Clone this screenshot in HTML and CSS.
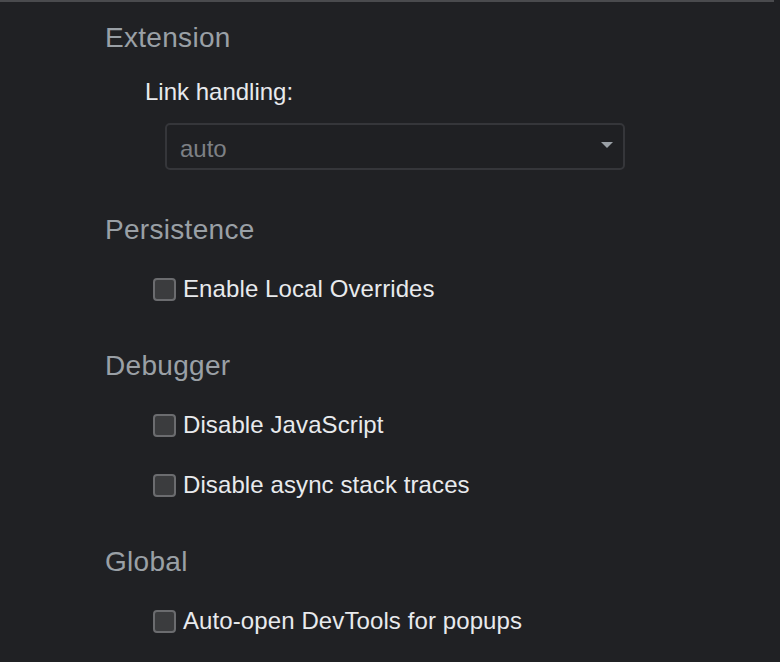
FILE: index.html
```html
<!DOCTYPE html>
<html lang="en">
<head>
<meta charset="utf-8">
<title>Settings</title>
<link rel="stylesheet" href="styles.css">
</head>
<body>
<div class="topline"></div>
<main class="settings">
  <section class="section section--select">
    <h2 class="section-title">Extension</h2>
    <div class="field">
      <div class="field-label">Link handling:</div>
      <div class="select">
        <span class="select-value">auto</span>
        <svg class="select-arrow" width="12" height="6" viewBox="0 0 12 6"><path d="M0 0H12L6 6Z" fill="#9aa0a6"/></svg>
      </div>
    </div>
  </section>
  <section class="section">
    <h2 class="section-title">Persistence</h2>
    <label class="check-row"><input type="checkbox" class="check"><span class="check-text">Enable Local Overrides</span></label>
  </section>
  <section class="section">
    <h2 class="section-title">Debugger</h2>
    <label class="check-row"><input type="checkbox" class="check"><span class="check-text">Disable JavaScript</span></label>
    <label class="check-row"><input type="checkbox" class="check"><span class="check-text">Disable async stack traces</span></label>
  </section>
  <section class="section">
    <h2 class="section-title">Global</h2>
    <label class="check-row"><input type="checkbox" class="check"><span class="check-text">Auto-open DevTools for popups</span></label>
  </section>
</main>
</body>
</html>
```

FILE: styles.css
```css
html, body {
  margin: 0;
  padding: 0;
  background: #202124;
  height: 100%;
  overflow: hidden;
}
body {
  font-family: "Liberation Sans", Arial, Helvetica, sans-serif;
  color: #e8eaed;
}
.topline {
  height: 2px;
  width: 774px;
  background: #4a4b4e;
}
.settings {
  padding: 20px 0 0 105px;
}
.section {
  margin-top: 49px;
}
.section:first-child {
  margin-top: 0;
}
.section--select + .section {
  margin-top: 44px;
}
.section-title {
  margin: 0;
  font-size: 28px;
  line-height: 32px;
  font-weight: normal;
  letter-spacing: 0.3px;
  color: #9aa0a6;
}
.field {
  padding-left: 40px;
  margin-top: 24px;
}
.field-label {
  font-size: 24px;
  line-height: 28px;
}
.select {
  margin: 17px 0 0 20px;
  width: 460px;
  height: 47px;
  box-sizing: border-box;
  border: 2px solid #35363a;
  border-radius: 5px;
  background: #1f2023;
  display: flex;
  align-items: center;
  justify-content: space-between;
  padding: 0 10px 0 13px;
}
.select-value {
  font-size: 24px;
  line-height: 28px;
  color: #7d8085;
  margin-top: 4px;
}
.select-arrow {
  display: block;
  margin-top: -4px;
}
.check-row {
  display: flex;
  align-items: center;
  height: 24px;
  margin-top: 36px;
  padding-left: 48px;
  gap: 7px;
}
.section-title + .check-row {
  margin-top: 31px;
}
.check {
  appearance: none;
  -webkit-appearance: none;
  margin: 0;
  width: 23px;
  height: 23px;
  box-sizing: border-box;
  border: 2px solid #6b6c6f;
  border-radius: 4px;
  background: #3b3c3e;
}
.check-text {
  font-size: 24px;
  line-height: 24px;
  letter-spacing: 0.1px;
  color: #e8eaed;
}
```
